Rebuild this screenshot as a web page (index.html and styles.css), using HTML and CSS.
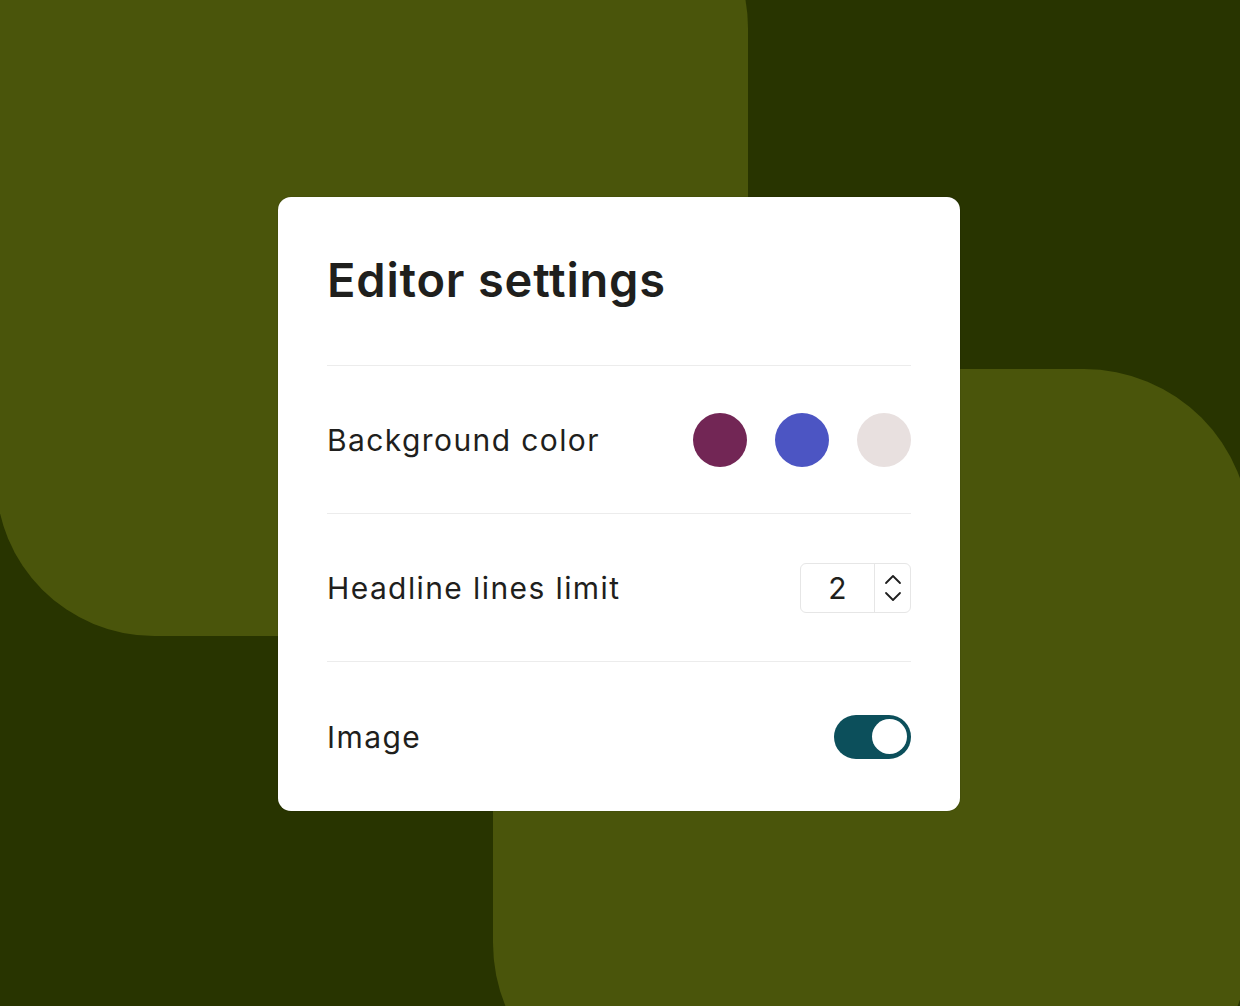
FILE: index.html
```html
<!DOCTYPE html>
<html lang="en">
<head>
  <meta charset="UTF-8">
  <meta name="viewport" content="width=device-width, initial-scale=1.0">
  <link rel="stylesheet" href="styles.css">
  <title>Editor settings</title>
</head>
<body>
  <div class="stage">
    <div class="blob blob-top"></div>
    <div class="blob blob-bottom"></div>

    <div class="card">
      <h1 class="card-title">Editor settings</h1>

      <div class="row">
        <span class="label">Background color</span>
        <div class="swatches">
          <span class="swatch swatch-plum"></span>
          <span class="swatch swatch-blue"></span>
          <span class="swatch swatch-sand"></span>
        </div>
      </div>

      <div class="row">
        <span class="label">Headline lines limit</span>
        <div class="stepper">
          <span class="stepper-value">2</span>
          <span class="stepper-arrows">
            <svg width="20" height="34" viewBox="0 0 20 34" fill="none" stroke="#1f1f1f" stroke-width="1.8" stroke-linecap="round" stroke-linejoin="round">
              <path d="M3 12 L10 5 L17 12"/>
              <path d="M3 22 L10 29 L17 22"/>
            </svg>
          </span>
        </div>
      </div>

      <div class="row">
        <span class="label">Image</span>
        <span class="toggle"><span class="toggle-knob"></span></span>
      </div>
    </div>
  </div>
</body>
</html>
```

FILE: styles.css
```css
html, body {
  margin: 0;
  padding: 0;
}

body {
  font-family: Inter, "Noto Sans", sans-serif;
  color: #1f1f1d;
  background-color: #283400;
}

.stage {
  position: relative;
  height: 100vh;
  overflow: hidden;
  display: flex;
  align-items: center;
  justify-content: center;
}

.blob {
  position: absolute;
  background-color: #4a550b;
}

.blob-top {
  left: -4px;
  top: -130px;
  width: 752px;
  height: 766px;
  border-radius: 158px;
}

.blob-bottom {
  left: 493px;
  top: 369px;
  width: 757px;
  height: 740px;
  border-radius: 166px;
}

.card {
  position: relative;
  width: 584px;
  margin: 2px 2px 0 0;
  padding: 0 49px;
  background-color: #fff;
  border-radius: 13px;
  box-shadow: 0 0 0 1px rgba(0, 0, 0, 0.06);
}

.card-title {
  margin: 0;
  height: 169px;
  display: flex;
  align-items: center;
  padding-bottom: 3px;
  font-size: 47px;
  font-weight: 600;
  letter-spacing: 0.8px;
  line-height: 1;
  border-bottom: 1px solid #ececec;
  box-sizing: border-box;
}

.row {
  display: flex;
  align-items: center;
  justify-content: space-between;
  height: 148px;
  border-bottom: 1px solid #ececec;
  box-sizing: border-box;
}

.row:nth-of-type(3) {
  height: 146px;
}

.row:last-child {
  border-bottom: none;
  height: 149px;
}

.label {
  font-size: 30px;
  font-weight: 400;
  letter-spacing: 1.4px;
}

.swatches {
  display: flex;
  gap: 28px;
}

.swatch {
  width: 54px;
  height: 54px;
  border-radius: 50%;
}

.swatch-plum { background-color: #722655; }
.swatch-blue { background-color: #4c55c3; }
.swatch-sand { background-color: #e8e0df; }

.stepper {
  display: flex;
  width: 111px;
  height: 50px;
  border: 1px solid #e6e6e6;
  border-radius: 6px;
  box-sizing: border-box;
}

.stepper-value {
  width: 73px;
  display: flex;
  align-items: center;
  justify-content: center;
  font-size: 30px;
  border-right: 1px solid #e6e6e6;
}

.stepper-arrows {
  flex: 1;
  display: flex;
  align-items: center;
  justify-content: center;
}

.toggle {
  width: 77px;
  height: 44px;
  border-radius: 22px;
  background-color: #0c4f5b;
  display: flex;
  align-items: center;
  justify-content: flex-end;
  padding: 0 4px;
  box-sizing: border-box;
}

.toggle-knob {
  width: 35px;
  height: 35px;
  border-radius: 50%;
  background-color: #fff;
}
```
